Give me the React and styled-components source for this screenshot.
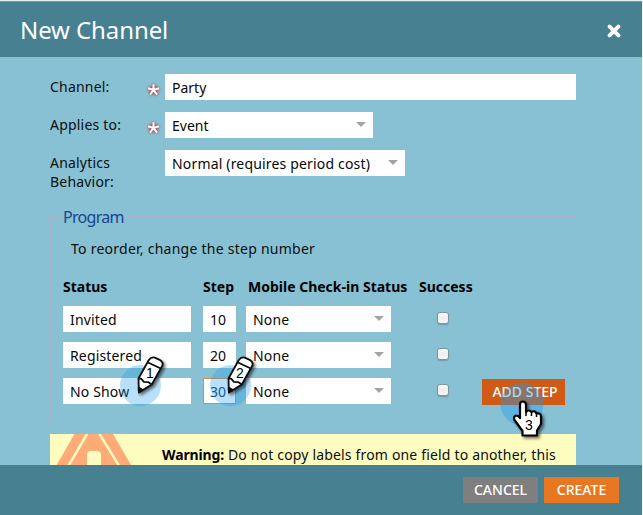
import React from "react";
import styled, { createGlobalStyle } from "styled-components";

const Global = createGlobalStyle`
  * { box-sizing: border-box; }
  body { margin: 0; background: #fff; overflow: hidden; }
`;

const Dialog = styled.div`
  position: relative;
  display: flex;
  flex-direction: column;
  width: 643px;
  height: 515px;
  overflow: hidden;
  border-top: 1px solid #e4eef1;
  border-right: 1px solid #f4fafb;
  background: #88c1d3;
  font: 14px/19px "Noto Sans", "Open Sans", sans-serif;
  color: #0a0f11;
`;

const Header = styled.header`
  display: flex;
  flex: none;
  align-items: center;
  justify-content: space-between;
  height: 56px;
  padding: 1px 21px 0 20px;
  background: #468091;
  border-top: 1px solid #6d9dab;
  color: #fff;
`;

const Title = styled.h1`
  margin: 0;
  font-size: 24px;
  line-height: 32px;
  font-weight: 400;
  letter-spacing: -0.1px;
`;

const CloseIcon = styled.svg`
  width: 14px;
  height: 14px;
  margin-top: 1px;
`;

const Body = styled.main`
  flex: none;
  height: 408px;
  padding: 17px 66px 0 50px;
  overflow: hidden;
`;

const FormRow = styled.div`
  display: flex;
  height: 38px;
`;

const Label = styled.label`
  width: 96px;
  padding-top: 3px;
  letter-spacing: 0.2px;
`;

const Required = styled.span`
  width: 19px;
  padding-top: 8px;
  svg { display: block; overflow: visible; }
`;

const Field = styled.div`
  display: flex;
  align-items: center;
  justify-content: space-between;
  flex: none;
  width: ${(p) => p.$w}px;
  height: 26px;
  padding: 2px 7px 0 ${(p) => (p.$active ? 6 : 7)}px;
  background: #fff;
  border: ${(p) => (p.$active ? "1px solid #d98a4c" : "0")};
  color: ${(p) => (p.$active ? "#163c58" : "#080808")};
  line-height: 24px;
  white-space: nowrap;
  letter-spacing: ${(p) => p.$track || 0}px;
`;

const Caret = styled.i`
  border: 5px solid transparent;
  border-top-color: #a3a3a3;
  border-bottom: 0;
  margin-top: -4px;
`;

const Program = styled.fieldset`
  width: 526px;
  height: 217px;
  margin: 19px 0 0;
  padding: 0 0 0 12px;
  border: 1px solid #a8b4c8;
  min-width: 0;
`;

const Legend = styled.legend`
  height: 18px;
  margin-left: -2px;
  padding: 0 3px 0 2px;
  color: #194591;
  font-size: 16px;
  line-height: 20px;
  letter-spacing: -0.7px;
`;

const Hint = styled.p`
  margin: 14px 0 0 8px;
  letter-spacing: 0.25px;
`;

const Steps = styled.div`
  display: grid;
  grid-template-columns: 128px 33px 145px 104px 83px;
  grid-template-rows: 29px;
  grid-auto-rows: 36px;
  margin-top: 19px;
  & > :nth-child(5n + 2) { margin-left: 12px; }
  & > :nth-child(5n + 3) { margin-left: 22px; }
  & > :nth-child(5n + 4) { margin-left: 68px; }
  & > :nth-child(5n) { margin-left: 9px; }
`;

const ColumnHead = styled.span`
  font-weight: 700;
  color: #000;
  white-space: nowrap;
  && { margin-left: ${(p) => p.$shift || 0}px; }
`;

const Check = styled.span`
  width: 12px;
  height: 12px;
  margin-top: 6px;
  border: 1px solid #7b969f;
  border-radius: 3px;
  background: linear-gradient(#fff, #eee 45%, #f7f7f7);
  box-shadow: 0 1px 1px #6f9daa;
`;

const Button = styled.button`
  width: ${(p) => p.$w}px;
  height: 26px;
  margin: 0;
  padding: 0;
  border: 0;
  background: ${(p) => p.$bg};
  color: #fff;
  font: 500 14px/24px "Noto Sans", "Open Sans", sans-serif;
  white-space: nowrap;
`;

const AddButton = styled(Button)`
  margin-top: 1px;
  padding-left: 3px;
`;

const Warning = styled.section`
  display: flex;
  width: 526px;
  height: 60px;
  margin-top: 10px;
  background: #fffcc0;
`;

const WarningText = styled.p`
  margin: 11px 0 0 26px;
  line-height: 20px;
  white-space: nowrap;
  letter-spacing: 0.17px;
  b { color: #000; letter-spacing: -0.12px; }
`;

const Footer = styled.footer`
  display: flex;
  flex: none;
  justify-content: flex-end;
  gap: 6px;
  height: 50px;
  padding: 12px 23px 0 0;
  background: #468091;
`;

const Marker = styled.svg`
  position: absolute;
  left: ${(p) => p.$x}px;
  top: ${(p) => p.$y}px;
  overflow: visible;
  text { font: 14px "Liberation Sans", Arial, sans-serif; fill: #000; }
`;

const asteriskStrokes =
  "M7.500 8V2.300M7.500 8 2 6.200M7.500 8 13 6.200M7.500 8 4 12.700M7.500 8 11 12.700";

function Asterisk() {
  return (
    <Required>
      <svg width="15" height="15" viewBox="0 0 15 15">
        <defs>
          <filter id="halo" x="-60%" y="-60%" width="220%" height="220%">
            <feGaussianBlur stdDeviation="1.300" />
          </filter>
        </defs>
        <path d={asteriskStrokes} stroke="#b8424c" strokeWidth="3.600" filter="url(#halo)" />
        <path d={asteriskStrokes} stroke="#fff" strokeWidth="2" />
      </svg>
    </Required>
  );
}

function Pencil({ x, y, n }) {
  return (
    <Marker $x={x} $y={y} width="46" height="54">
      <defs>
        <filter id="shade" x="-50%" y="-50%" width="200%" height="200%">
          <feDropShadow dx="2" dy="2" stdDeviation="1.500" floodColor="#000" floodOpacity=".55" />
        </filter>
      </defs>
      <circle cx="20.500" cy="29.500" r="20.500" fill="#199bf0" fillOpacity=".31" />
      <g filter="url(#shade)" stroke="#0b0b0b" strokeWidth="1.800" strokeLinejoin="round">
        <path d="M18.500 22.500 28.800 4Q31 .8 34.800 1.600L40.300 4.200Q43.600 6.500 42.300 9.800L31.800 28.500 18.900 36.500Z" fill="#fff" />
        <path d="M28 6.500 40.800 12.500M18.500 22.500l2.600.2 2.800 3.200 4.200.2 3.700 2.400" fill="none" />
        <path d="M18.700 31.500 22.800 34 18.900 36.500Z" fill="#000" />
      </g>
      <text x="26" y="22">{n}</text>
    </Marker>
  );
}

function Pointer() {
  return (
    <Marker $x={500} $y={381} width="50" height="58">
      <circle cx="22" cy="22" r="21.500" fill="#199bf0" fillOpacity=".38" />
      <path
        filter="url(#shade)"
        d="M20 22.500Q20 19.500 22.800 19.500T26 22.500V30Q28.500 27 31.500 30Q35 28 36.500 31.500Q41 30.500 41 35V42L37 48.500V53.500H22.500V49L14.500 38Q13 34.500 16 33.500Q18.500 33.500 20 36Z"
        fill="#fff" stroke="#000" strokeWidth="2.200" strokeLinejoin="round"
      />
      <path d="M26 29v5M31.500 30v4M36.500 31.500V35" stroke="#000" strokeWidth="1.500" />
      <text x="25" y="47.500">3</text>
    </Marker>
  );
}

const steps = [
  { status: "Invited", step: "10" },
  { status: "Registered", step: "20" },
  { status: "No Show", step: "30", active: true },
];

export default function App() {
  return (
    <Dialog>
      <Global />
      <Header>
        <Title>New Channel</Title>
        <CloseIcon viewBox="0 0 14 14">
          <path d="M2.600 2.600l8.800 8.800M11.400 2.600l-8.800 8.800" stroke="#fff" strokeWidth="3.900" strokeLinecap="round" />
        </CloseIcon>
      </Header>
      <Body>
        <FormRow>
          <Label>Channel:</Label>
          <Asterisk />
          <Field $w={411}>Party</Field>
        </FormRow>
        <FormRow>
          <Label>Applies to:</Label>
          <Asterisk />
          <Field $w={208}>Event<Caret /></Field>
        </FormRow>
        <FormRow>
          <Label>Analytics Behavior:</Label>
          <Required />
          <Field $w={240} $track={0.17}>Normal (requires period cost)<Caret /></Field>
        </FormRow>
        <Program>
          <Legend>Program</Legend>
          <Hint>To reorder, change the step number</Hint>
          <Steps>
            <ColumnHead>Status</ColumnHead>
            <ColumnHead $shift={12}>Step</ColumnHead>
            <ColumnHead $shift={24}>Mobile Check-in Status</ColumnHead>
            <ColumnHead $shift={50}>Success</ColumnHead>
            <span />
            {steps.map((s) => (
              <React.Fragment key={s.status}>
                <Field $w={128} $track={0.15}>{s.status}</Field>
                <Field $w={33} $active={s.active}>{s.step}</Field>
                <Field $w={145} $track={0.2}>None<Caret /></Field>
                <Check />
                {s.active ? <AddButton $w={83} $bg="#cf5b16">ADD STEP</AddButton> : <span />}
              </React.Fragment>
            ))}
          </Steps>
        </Program>
        <Warning>
          <svg width="86" height="60" viewBox="0 0 86 60">
            <path d="M24.500 0H63L98 60H-10Z" fill="#ffab78" />
            <path d="M37 0 2 60M49.500 0l37 60" stroke="#fffcc0" strokeWidth="2.500" />
            <rect x="37" y="17" width="14" height="50" rx="4" fill="#fffcc0" />
          </svg>
          <WarningText><b>Warning:</b> Do not copy labels from one field to another, this</WarningText>
        </Warning>
      </Body>
      <Footer>
        <Button $w={75} $bg="#7f7f7f">CANCEL</Button>
        <Button $w={75} $bg="#e87722">CREATE</Button>
      </Footer>
      <Pencil x={120} y={355} n="1" />
      <Pencil x={210} y={355} n="2" />
      <Pointer />
    </Dialog>
  );
}
